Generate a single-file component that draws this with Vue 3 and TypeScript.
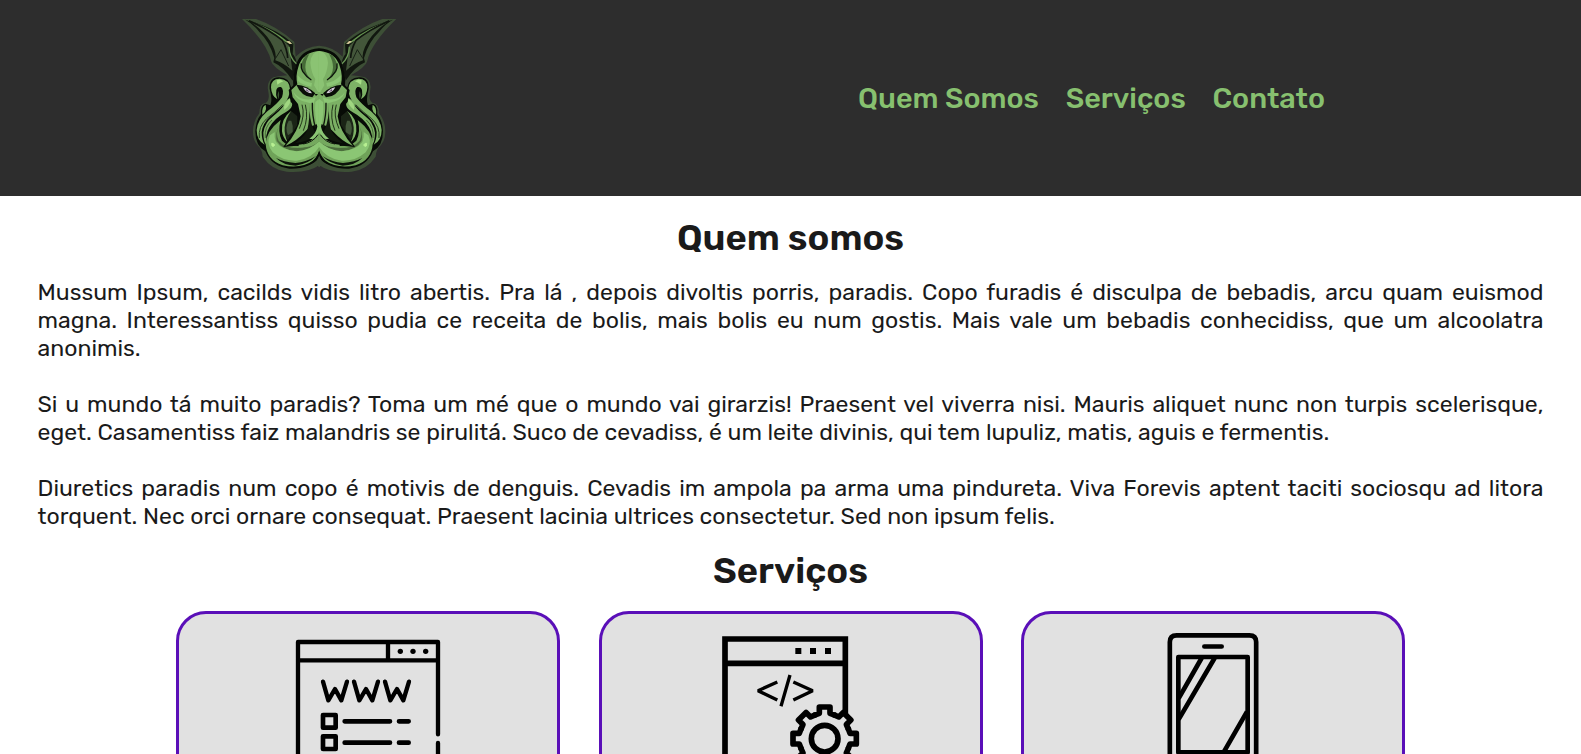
<script setup lang="ts">
interface Line {
  text: string
  full: boolean
}

const links: { label: string; cls: string }[] = [
  { label: 'Quem Somos', cls: 'about' },
  { label: 'Serviços', cls: 'services' },
  { label: 'Contato', cls: 'contact' },
]

const paragraphs: Line[][] = [
  [
    { text: 'Mussum Ipsum, cacilds vidis litro abertis. Pra lá , depois divoltis porris, paradis. Copo furadis é disculpa de bebadis, arcu quam euismod', full: true },
    { text: 'magna. Interessantiss quisso pudia ce receita de bolis, mais bolis eu num gostis. Mais vale um bebadis conhecidiss, que um alcoolatra', full: true },
    { text: 'anonimis.', full: false },
  ],
  [
    { text: 'Si u mundo tá muito paradis? Toma um mé que o mundo vai girarzis! Praesent vel viverra nisi. Mauris aliquet nunc non turpis scelerisque,', full: true },
    { text: 'eget. Casamentiss faiz malandris se pirulitá. Suco de cevadiss, é um leite divinis, qui tem lupuliz, matis, aguis e fermentis.', full: false },
  ],
  [
    { text: 'Diuretics paradis num copo é motivis de denguis. Cevadis im ampola pa arma uma pindureta. Viva Forevis aptent taciti sociosqu ad litora', full: true },
    { text: 'torquent. Nec orci ornare consequat. Praesent lacinia ultrices consectetur. Sed non ipsum felis.', full: false },
  ],
]

const teeth: number[] = [0, 45, 90, 135, 180, 225, 270, 315]
</script>

<template>
  <div class="page">
    <header class="header">
      <svg class="logo" viewBox="0 0 540 510" aria-hidden="true">
        <defs>
          <g id="half">
            <!-- glow -->
            <path d="M36 27 L78 27 Q140 48 193 96 L197 140 Q225 110 268 107 L268 465 Q235 490 170 485 Q125 480 98 440 Q98 420 82 405 Q65 385 70 350 Q75 325 88 310 Q88 280 108 278 Q120 270 115 245 Q108 215 130 202 L150 198 L172 196 Q128 170 124 155 Q112 100 36 27Z" fill="#3d4f36" />
            <!-- wing -->
            <path d="M46 29 Q138 54 190 101 L188 132 Q196 140 200 158 L188 212 Q160 170 130 157 L133 144 Q119 95 88 66 Q70 42 46 29Z" fill="#11170f" />
            <path d="M62 36 Q132 62 177 107 L183 150 L187 182 Q163 160 136 151 Q142 129 121 94 Q99 60 62 36Z" fill="#43563a" />
            <path d="M48 29 Q126 54 172 94 L190 103 Q172 103 145 82 Q102 48 48 29Z" fill="#669451" />
            <path d="M57 32 Q118 59 157 91 Q172 118 173 144" fill="none" stroke="#10150e" stroke-width="5" />
            <path d="M136 146 L153 119 L176 168" fill="none" stroke="#172015" stroke-width="3" />
            <path d="M177 110 Q178 143 200 162" fill="none" stroke="#6b9858" stroke-width="4" />
            <path d="M169 94 L178 93 L186 101 L179 102Z" fill="#d8c79b" />
            <!-- silhouette of the tentacles -->
            <path d="M119 236 Q117 203 147 202 Q178 202 184 234 L215 300 L268 330 L268 440 Q240 478 178 476 Q125 470 106 424 Q76 408 76 364 Q78 331 93 313 Q90 286 106 281 L121 286 Q128 270 119 236Z" fill="#070b06" />
            <!-- side tentacles -->
            <g fill="#7db266">
              <path d="M123 232 Q123 206 149 206 Q178 208 180 237 Q180 262 160 285 Q145 300 122 318 Q98 340 95 366 Q95 390 104 404 Q80 392 80 360 Q82 330 112 304 Q140 284 156 262 Q163 238 153 231 Q142 229 139 240 Q136 256 142 268 Q124 258 123 232Z" />
              <path d="M97 314 Q94 290 107 284 Q110 296 105 306Z" />
              <path d="M180 264 Q198 290 168 306 Q134 324 118 352 Q104 376 110 406 Q100 396 100 368 Q104 338 130 318 Q152 300 160 288 Q160 274 180 264Z" />
            </g>
            <path d="M145 243 Q150 253 145 268 Q140 256 145 243Z" fill="#3b5632" />
            <path d="M180 266 Q186 280 163 300 Q158 280 180 266Z" fill="#a0d781" />
            <path d="M140 211 Q151 206 160 214 Q150 218 142 224Z" fill="#a8df87" />
            <path d="M88 384 Q84 350 110 326 Q134 308 158 284" fill="none" stroke="#2b4322" stroke-width="3" />
            <path d="M106 384 Q102 352 126 330" fill="none" stroke="#2b4322" stroke-width="2" />
            <!-- hollow between the tentacles -->
            <path d="M184 304 Q160 322 160 358 Q162 380 178 394 L202 366 L204 320Z" fill="#1a2416" />
            <path d="M176 332 Q164 352 174 376 L188 366 Q190 346 184 332Z" fill="#42573a" />
            <path d="M184 302 Q152 326 156 364 Q158 384 174 398 Q162 376 164 352 Q166 326 184 302Z" fill="#7db266" />
            <!-- lower curl -->
            <path d="M152 330 Q108 364 107 402 Q110 450 158 466 Q214 478 252 450 Q264 438 268 424 L268 372 Q240 406 206 408 Q170 408 156 392 Q142 366 152 330Z" fill="#6fa259" />
            <path d="M146 352 Q136 372 146 392 Q164 414 204 414 Q244 412 268 380 L268 392 Q238 424 200 424 Q156 420 140 392 Q136 368 146 352Z" fill="#4b6d3c" />
            <path d="M120 376 Q108 402 128 427 Q158 454 200 452 Q246 446 268 410 L268 394 Q240 422 200 424 Q156 420 138 396 Q132 378 134 366Z" fill="#8bc674" />
            <path d="M138 444 Q160 466 197 467 Q234 462 258 438 Q230 456 196 459 Q160 456 138 444Z" fill="#0c130a" />
            <path d="M125 400 Q130 398 134 405 Q131 412 126 408Z" fill="#b8f092" stroke="#b8f092" stroke-width="3" />
            <path d="M160 406 Q210 400 266 350 L268 374 Q236 398 206 402Z" fill="#090e07" />
            <!-- head and face -->
            <path d="M268 115 Q212 119 198 165 Q187 200 190 226 L176 240 L182 275 L202 299 L202 345 L160 411 Q218 409 268 380Z" fill="#070b06" />
            <path d="M268 123 Q217 127 205 171 Q196 197 202 223 L184 240 L188 262 L204 282 L212 319 Q206 364 166 408 Q199 394 224 366 L240 350 L268 340Z" fill="#7bb064" />
            <path d="M268 123 Q243 126 241 158 Q244 190 256 207 L252 226 L264 246 L268 246Z" fill="#8bc373" />
            <path d="M228 136 Q208 160 216 181 Q228 200 246 212 Q226 194 226 172 Q226 152 238 132Z" fill="#456b37" />
            <path d="M214 160 Q212 174 218 184 Q230 202 244 210" fill="none" stroke="#0d140b" stroke-width="4" />
            <path d="M203 196 Q220 216 246 219 L244 230 Q216 224 203 212Z" fill="#8bc674" />
            <path d="M199 224 Q232 226 256 250 L247 262 Q214 260 199 224Z" fill="#090e07" />
            <path d="M219 232 Q238 236 246 250 Q228 250 219 232Z" fill="#d3cbd6" />
            <path d="M229 237 L239 246 L229 243Z" fill="#66526f" />
            <path d="M190 246 Q206 270 240 268 L257 262 L250 282 L228 276 Q198 270 190 246Z" fill="#8bc674" />
            <path d="M254 252 L264 252 L258 258Z" fill="#0b1008" />
            <!-- creases -->
            <path d="M216 284 Q226 316 208 356 M226 284 Q236 324 220 362" fill="none" stroke="#223519" stroke-width="3" />
            <path d="M238 280 Q238 330 250 356 Q262 374 240 388 Q220 396 196 400 Q226 376 232 360 Q240 326 238 280Z" fill="#11190d" />
            <path d="M247 278 Q246 316 256 352" fill="none" stroke="#11190d" stroke-width="4" />
            <path d="M268 266 L256 276 Q253 316 262 350 Q258 372 238 386 Q254 390 268 380Z" fill="#8bc674" />
            <path d="M206 404 Q244 402 268 366 L268 394 Q244 416 206 412Z" fill="#75a95f" />
            <path d="M220 402 Q248 398 264 374" fill="none" stroke="#11190d" stroke-width="3" />
            <!-- notch between the two curls -->
            <path d="M268 420 Q262 444 236 464 Q256 460 268 440Z" fill="#070b06" />
            <path d="M268 436 L256 462 L268 472Z" fill="#3d4f36" />
          </g>
        </defs>
        <use href="#half" />
        <use href="#half" transform="translate(535 0) scale(-1 1)" />
      </svg>
      <nav class="nav">
        <a v-for="l in links" :key="l.cls" :class="l.cls">{{ l.label }}</a>
      </nav>
    </header>

    <main>
      <h2 class="title-about">Quem somos</h2>
      <section class="copy">
        <p v-for="(p, i) in paragraphs" :key="i">
          <span v-for="(line, j) in p" :key="j" class="line" :class="{ full: line.full }">{{ line.text }}</span>
        </p>
      </section>

      <h2 class="title-services">Serviços</h2>
      <section class="cards">
        <article class="card">
          <svg viewBox="27 42 1134 600" fill="none" stroke="#000" stroke-width="13" stroke-linejoin="round" stroke-linecap="round">
            <path d="M384 640 V126 H804 V403 M804 429 V640 M384 181 H804 M654 126 V181" />
            <g fill="#000" stroke="none">
              <circle cx="691" cy="154" r="8" /><circle cx="729" cy="154" r="8" /><circle cx="767" cy="154" r="8" />
            </g>
            <path d="M459 245 L475 301 L495 267 L514 301 L531 245 M552 245 L568 301 L588 267 L607 301 L624 245 M645 245 L661 301 L681 267 L700 301 L717 245" />
            <path d="M459 345 H497 V383 H459Z M459 409 H497 V447 H459Z M524 364 H660 M687 364 H716 M524 428 H660 M687 428 H716" stroke-width="14" />
          </svg>
        </article>
        <article class="card">
          <svg viewBox="36 42 1134 600" fill="none" stroke="#000">
            <path d="M405 640 V117 H766 V345 M405 190 H766" stroke-width="17" />
            <path d="M616 144h18v18h-18z M660 144h18v18h-18z M705 144h18v18h-18z" fill="#000" stroke="none" />
            <path d="M562 246 L504 272 L562 300 M610 246 L668 272 L610 300 M600 225 L573 319" stroke-width="10" stroke-linejoin="bevel" />
            <g transform="translate(704 416)">
              <g v-for="a in teeth" :key="a" :transform="`rotate(${a})`">
                <path d="M-32 -70 L-16 -76 V-95 H16 V-76 L32 -70" stroke-width="17" stroke-linejoin="round" />
              </g>
              <circle r="40" stroke-width="17" />
            </g>
          </svg>
        </article>
        <article class="card">
          <svg viewBox="42 42 1134 600" fill="none" stroke="#000" stroke-width="14">
            <path d="M479.500 640 V126 Q479.500 106 500 106 H718 Q738.500 106 738.500 126 V640" stroke-width="14" />
            <path d="M583 139.500 H635" stroke-width="14" stroke-linecap="round" />
            <rect x="505" y="171" width="208" height="286" stroke-linejoin="round" />
            <path d="M575 174 L506 295 M614 174 L506 358 M711 335 L642 455" />
          </svg>
        </article>
      </section>
    </main>
  </div>
</template>

<style>
body {
  margin: 0;
  overflow: hidden;
  background: #fff;
}
</style>

<style scoped>
.page {
  height: 754px;
  overflow: hidden;
  font-family: Rubik, Roboto, sans-serif;
  color: #1a1a1a;
}
.header {
  box-sizing: border-box;
  height: 196px;
  padding: 10px 256px 0 230px;
  display: flex;
  justify-content: space-between;
  align-items: flex-start;
  background: #2d2d2d;
}
.logo {
  width: 180px;
  height: 170px;
}
.nav {
  display: flex;
  gap: 26.7px;
  padding-top: 71px;
  font-size: 28.8px;
  font-weight: 500;
  line-height: 34px;
  color: #87c06f;
  white-space: nowrap;
}
h2 {
  margin: 0;
  text-align: center;
  font-size: 36.4px;
  line-height: 44px;
  font-weight: 600;
}
.title-about {
  padding-top: 20px;
}
.copy {
  padding: 18px 37.5px 0;
  font-size: 23.06px;
  line-height: 28px;
  font-weight: 400;
}
.copy p {
  margin: 0 0 28px;
}
.line {
  display: block;
  white-space: nowrap;
}
.full {
  text-align: justify;
  text-align-last: justify;
}
.title-services {
  margin-top: -9px;
}
.cards {
  margin-top: 18px;
  padding: 0 176px;
  display: flex;
  justify-content: space-between;
}
.card {
  box-sizing: border-box;
  width: 384px;
  height: 320px;
  border: 3px solid #5a0fb8;
  border-radius: 30px;
  background: #e1e1e1;
}
.card svg {
  display: block;
  width: 378px;
  height: 200px;
}
</style>
